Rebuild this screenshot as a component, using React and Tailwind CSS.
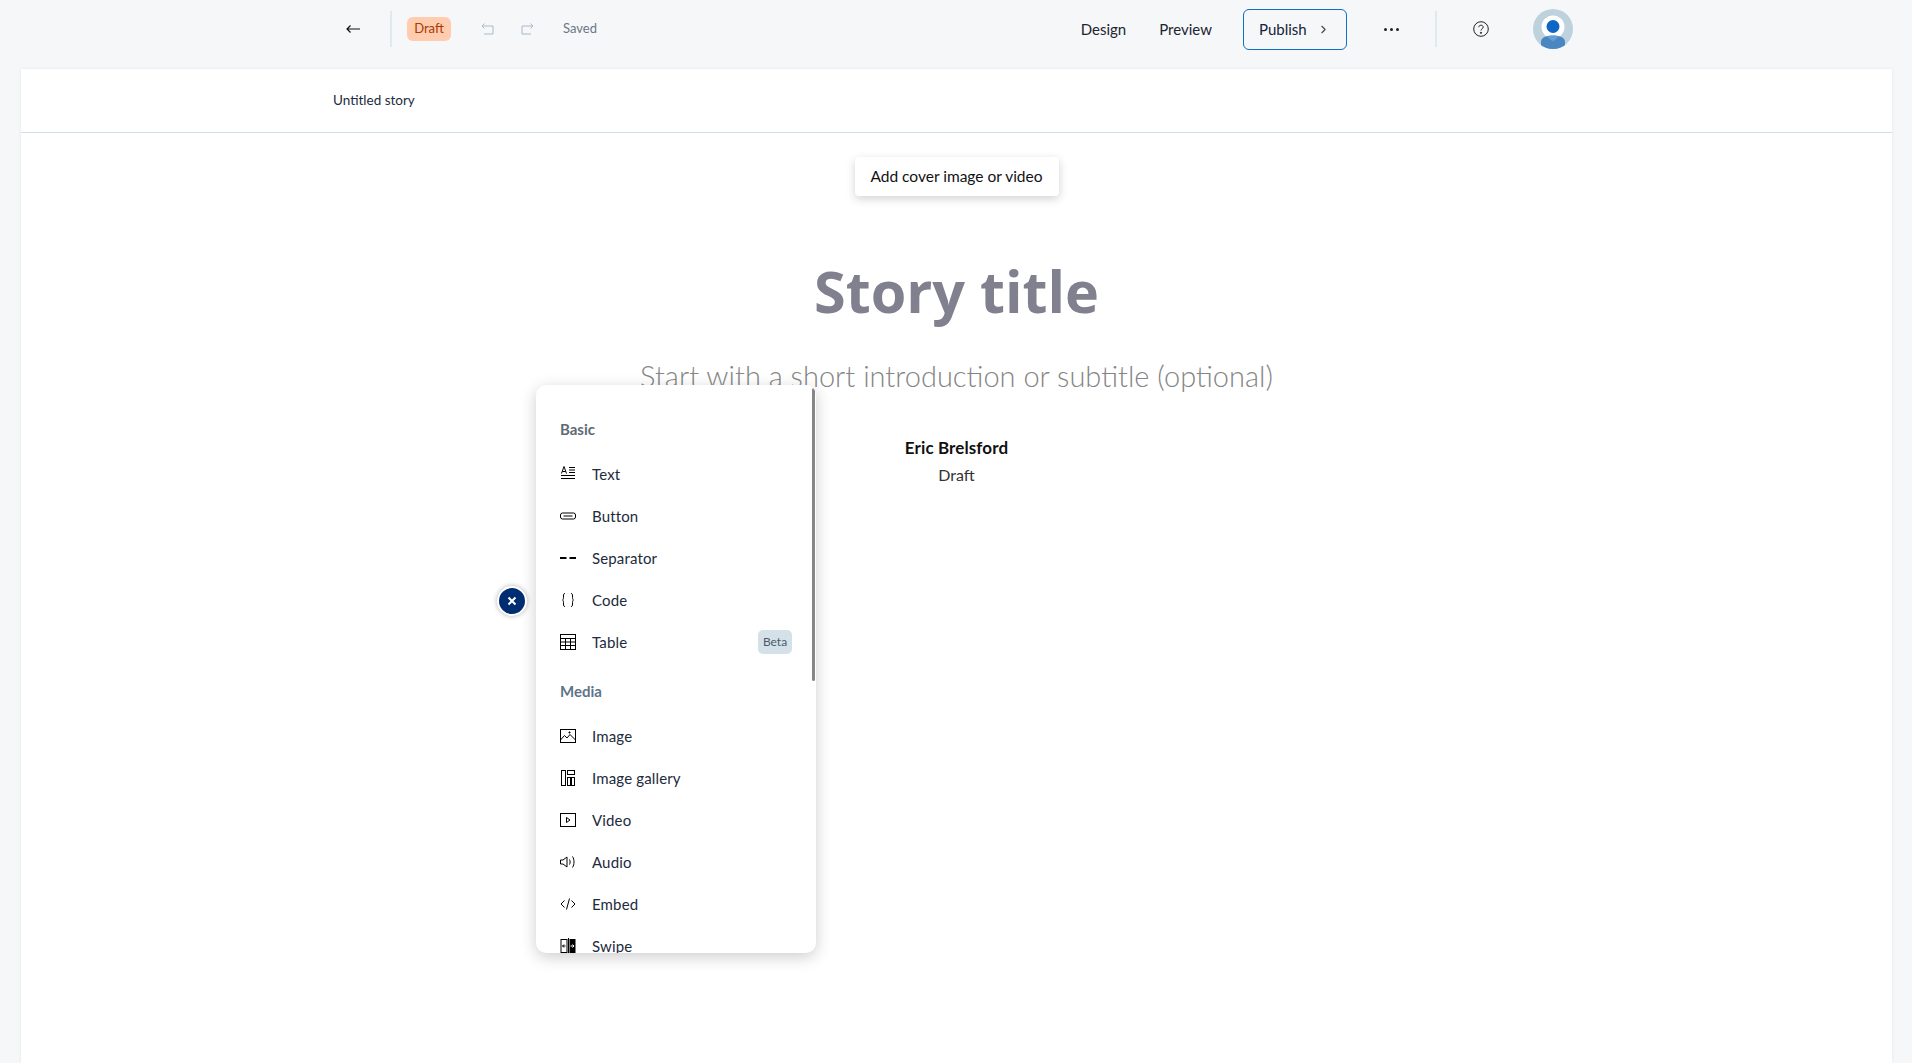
import React from 'react';
import { ChevronRight } from 'lucide-react';

const Ico = ({ children, w = 16, h = 16 }) => (
  <svg width={w} height={h} viewBox="0 0 16 16" fill="none" stroke="#000" strokeWidth="1" className="shrink-0">{children}</svg>
);

const TextIcon = () => (
  <Ico>
    <path d="M1.500 7.500 4 .5l2.500 7M2.500 5.500h3" />
    <path d="M9 1.500h6M9 4h6M9 6.500h6M1 9.500h14M1 12.500h14" />
  </Ico>
);
const ButtonIcon = () => (
  <Ico>
    <rect x="0.500" y="5" width="15" height="6" rx="2" />
    <path d="M3.500 8h9" />
  </Ico>
);
const SeparatorIcon = () => (
  <Ico>
    <path d="M0 8h6.500M9.500 8H16" strokeWidth="2" />
  </Ico>
);
const CodeIcon = () => (
  <Ico>
    <path d="M5 1.500C3.500 1.500 3.500 2.500 3.500 4s0 3.500-1 4c1 .5 1 2.500 1 4s0 2.500 1.500 2.500M11 1.500c1.500 0 1.500 1 1.500 2.500s0 3.500 1 4c-1 .5-1 2.500-1 4s0 2.500-1.500 2.500" />
  </Ico>
);
const TableIcon = () => (
  <Ico>
    <rect x="0.500" y="0.500" width="15" height="15" />
    <path d="M.5 4.500h15M.5 8h15M.5 11.500h15M5.500 4.500v11M10.500 4.500v11" />
  </Ico>
);
const ImageIcon = () => (
  <Ico>
    <rect x="0.500" y="1.500" width="15" height="13" />
    <path d="M.5 12 4.500 7.500 7 10l3-3.500 5.500 5.500" />
    <path d="M9.500 3.500v2M8.500 4.500h2" />
  </Ico>
);
const GalleryIcon = () => (
  <Ico>
    <rect x="1.500" y="0.500" width="4" height="15" />
    <rect x="7.500" y="0.500" width="7" height="4" />
    <rect x="7.500" y="7.500" width="3" height="8" />
    <rect x="11.500" y="7.500" width="3" height="8" />
  </Ico>
);
const VideoIcon = () => (
  <Ico>
    <rect x="0.500" y="1.500" width="15" height="13" />
    <path d="M6.500 5.500v5L10 8z" />
  </Ico>
);
const AudioIcon = () => (
  <Ico>
    <path d="M.5 6h2.500L7 3v10L3 10H.5zM9.500 5.500c.8 1.500.8 3.500 0 5M12.500 2.500c2 3 2 8 0 11" />
  </Ico>
);
const EmbedIcon = () => (
  <Ico>
    <path d="M4.500 4.500 1 8l3.500 3.500M11.500 4.500 15 8l-3.500 3.500M9.500 2.500l-3 11" />
  </Ico>
);
const SwipeIcon = () => (
  <Ico>
    <rect x="1" y="1.500" width="6" height="13" />
    <rect x="9.500" y="1" width="6" height="14" fill="#000" stroke="none" />
    <path d="M2.500 8h3M2.500 8 4 6.500M2.500 8 4 9.500" />
    <path d="M8.500 0v16" />
    <path d="M10.500 8h3.500M14 8l-1.500-1.500M14 8l-1.500 1.500" stroke="#fff" />
  </Ico>
);

const Item = ({ icon, label, beta }) => (
  <div className="h-[42px] flex items-center shrink-0">
    <span className="w-[32px] flex">{icon}</span>
    <span className="text-[15px] tracking-[0.15px] text-[#1c2b3d]">{label}</span>
    {beta && <span className="ml-auto h-[24px] w-[34px] rounded-[5px] bg-[#d5e1e8] text-[12px] text-[#4a5a6b] flex items-center justify-center">Beta</span>}
  </div>
);

const BlockMenu = () => (
  <div className="absolute left-[536px] top-[385px] w-[280px] h-[568px] bg-white rounded-[10px] shadow-[0_4px_16px_rgba(0,0,0,0.2)] overflow-hidden">
    <div className="pl-[24px] pr-[24px] pt-[34px] flex flex-col h-full">
      <div className="h-[20px] flex items-center text-[15px] font-bold text-[#5e6b75]">Basic</div>
      <div className="h-[14px] shrink-0" />
      <Item icon={<TextIcon />} label="Text" />
      <Item icon={<ButtonIcon />} label="Button" />
      <Item icon={<SeparatorIcon />} label="Separator" />
      <Item icon={<CodeIcon />} label="Code" />
      <Item icon={<TableIcon />} label="Table" beta />
      <div className="h-[18px] shrink-0" />
      <div className="h-[20px] flex items-center text-[15px] font-bold text-[#5e7488] shrink-0">Media</div>
      <div className="h-[14px] shrink-0" />
      <Item icon={<ImageIcon />} label="Image" />
      <Item icon={<GalleryIcon />} label="Image gallery" />
      <Item icon={<VideoIcon />} label="Video" />
      <Item icon={<AudioIcon />} label="Audio" />
      <Item icon={<EmbedIcon />} label="Embed" />
      <Item icon={<SwipeIcon />} label="Swipe" />
    </div>
    {/* scrollbar thumb */}
    <div className="absolute right-[1px] top-[3px] w-[3px] h-[293px] rounded-full bg-[#868686]" />
  </div>
);

export default function App() {
  return (
    <div className="relative h-screen overflow-hidden bg-[#f5f7f9] font-['Lato','Liberation_Sans',sans-serif] text-[#111]">
      {/* top bar */}
      <div className="h-[69px] flex items-center pl-[346px] pr-[339px] pb-[11px]">
        <svg width="14" height="10" viewBox="0 0 14 10" fill="none" stroke="#111" strokeWidth="1.200" className="mr-[30px]">
          <path d="M14 5H1M4.500 1.500 1 5l3.500 3.500" />
        </svg>
        <div className="w-[2px] h-[36px] bg-[#e0e9ec]" />
        <span className="ml-[15px] w-[44px] h-[24px] rounded-[6px] bg-[#ffccb0] text-[#a63a00] text-[13px] flex items-center justify-center">Draft</span>
        <svg width="13" height="12" viewBox="0 0 13 12" fill="none" stroke="#a9bac8" className="ml-[30px]">
          <path d="M3.500 .5 1 3l2.500 2.500M1 3h11v8H3" />
        </svg>
        <svg width="13" height="12" viewBox="0 0 13 12" fill="none" stroke="#a9bac8" className="ml-[27px]">
          <path d="M9.500 .5 12 3 9.500 5.500M12 3H1v8h9" />
        </svg>
        <span className="ml-[29px] text-[13px] text-[#6b7785]">Saved</span>
        <span className="ml-auto text-[15px] text-[#1c2430]">Design</span>
        <span className="ml-[33px] text-[15px] text-[#1c2430]">Preview</span>
        <button className="ml-[31px] w-[104px] h-[41px] rounded-[6px] border border-[#0f6ec6] flex items-center pl-[15px] text-[15px] text-[#14233a]">
          Publish
          <ChevronRight size={13} className="ml-[10px] text-[#444]" />
        </button>
        <div className="ml-[37px] flex gap-[3px]">
          <span className="w-[3px] h-[3px] rounded-full bg-[#222]" />
          <span className="w-[3px] h-[3px] rounded-full bg-[#222]" />
          <span className="w-[3px] h-[3px] rounded-full bg-[#222]" />
        </div>
        <div className="ml-[36px] w-[2px] h-[36px] bg-[#e0e9ec]" />
        <svg width="16" height="16" viewBox="0 0 16 16" fill="none" stroke="#222" className="ml-[36px]">
          <circle cx="8" cy="8" r="7.300" />
          <path d="M5.800 6.200C5.800 5 6.800 4.200 8 4.200s2.200.8 2.200 2c0 1.600-2.200 1.600-2.200 3.300" />
          <circle cx="8" cy="11.800" r=".6" fill="#222" />
        </svg>
        <svg width="40" height="40" viewBox="0 0 40 40" className="ml-[44px] shrink-0">
          <defs>
            <clipPath id="avatar-clip"><circle cx="20" cy="20" r="20" /></clipPath>
          </defs>
          <g clipPath="url(#avatar-clip)">
            <rect width="40" height="40" fill="#bdd2dd" />
            <circle cx="20" cy="18" r="11.500" fill="#fff" />
            <circle cx="20" cy="17.500" r="6.500" fill="#0f66c4" />
            <path d="M8 40V33c0-4 4-6.500 12-6.500S32 29 32 33v7z" fill="#4a86c0" />
            <path d="M14 27.500c3-1 9-1 12 0l-6 5z" fill="#659fd8" />
          </g>
        </svg>
      </div>

      {/* story panel */}
      <div className="ml-[21px] mr-[20px] h-[994px] bg-white shadow-[0_0_3px_rgba(0,0,0,0.08)]">
        <div className="h-[64px] flex items-center pl-[312px] border-b border-[#cfe0e8] text-[13.500px] text-[#1c2b3d]">Untitled story</div>
        <div className="flex flex-col items-center">
          <button className="mt-[24px] w-[204px] h-[39px] rounded-[4px] bg-white shadow-[0_3px_10px_rgba(0,0,0,0.18)] text-[15.500px] text-[#111]">Add cover image or video</button>
          <h1 className="mt-[56px] h-[78px] leading-[78px] text-[57.500px] font-bold text-[#80808f] font-['Open_Sans',sans-serif]">Story title</h1>
          <p className="mt-[26px] h-[40px] leading-[40px] text-[29px] font-light text-[#858585]">Start with a short introduction or subtitle (optional)</p>
          <p className="mt-[40px] text-[17px] tracking-[0.1px] leading-[24px] font-bold text-[#111]">Eric Brelsford</p>
          <p className="mt-[3px] text-[16px] leading-[24px] text-[#333]">Draft</p>
        </div>
      </div>

      <BlockMenu />

      {/* close block menu */}
      <button className="absolute left-[497px] top-[586px] w-[30px] h-[30px] rounded-full bg-[#002d72] border-2 border-white shadow-[0_0_5px_rgba(0,0,0,0.3)] flex items-center justify-center">
        <svg width="10" height="10" viewBox="0 0 10 10" stroke="#fff" strokeWidth="2"><path d="M1.500 1.500l7 7M8.500 1.500l-7 7" /></svg>
      </button>
    </div>
  );
}
